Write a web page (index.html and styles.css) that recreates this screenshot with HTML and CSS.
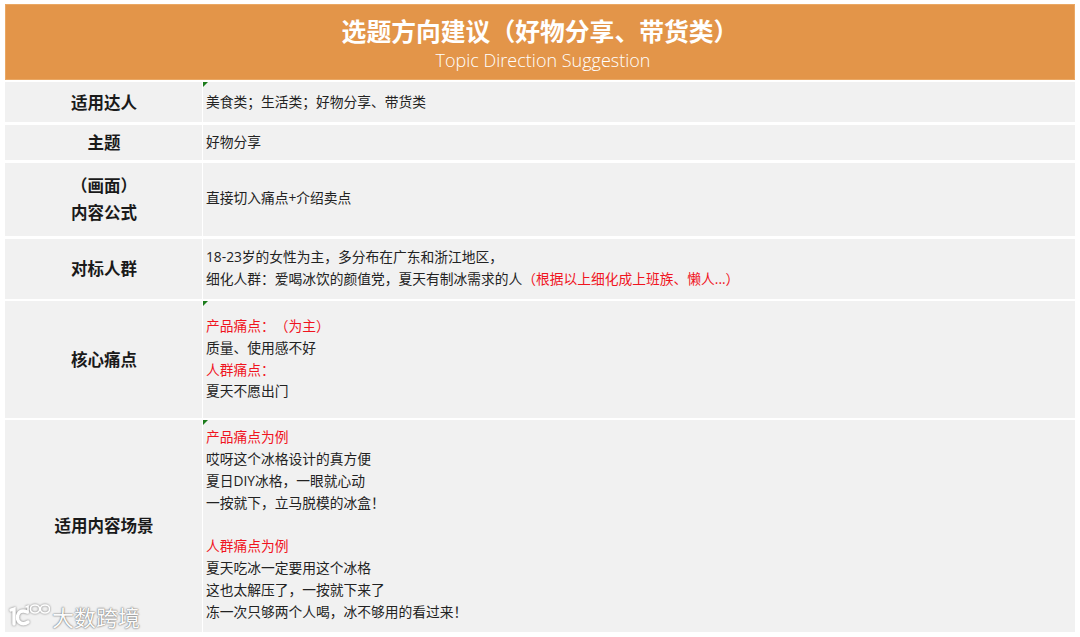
FILE: index.html
```html
<!DOCTYPE html>
<html lang="zh">
<head>
<meta charset="utf-8">
<title>选题方向建议</title>
<link rel="stylesheet" href="styles.css">
</head>
<body>
<main class="sheet">
  <header class="banner">
    <h1 class="banner-title">选题方向建议（好物分享、带货类）</h1>
    <p class="banner-sub">Topic Direction Suggestion</p>
  </header>
  <section class="row row-a">
    <div class="label">适用达人</div>
    <div class="cell flagged"><p>美食类；生活类；好物分享、带货类</p></div>
  </section>
  <section class="row row-b">
    <div class="label">主题</div>
    <div class="cell"><p>好物分享</p></div>
  </section>
  <section class="row row-c">
    <div class="label label-tall"><span>（画面）</span><span>内容公式</span></div>
    <div class="cell"><p>直接切入痛点+介绍卖点</p></div>
  </section>
  <section class="row row-d">
    <div class="label">对标人群</div>
    <div class="cell">
      <p>18-23岁的女性为主，多分布在广东和浙江地区，</p>
      <p>细化人群：爱喝冰饮的颜值党，夏天有制冰需求的人<span class="red">（根据以上细化成上班族、懒人...）</span></p>
    </div>
  </section>
  <section class="row row-e">
    <div class="label">核心痛点</div>
    <div class="cell flagged">
      <p class="red">产品痛点：（为主）</p>
      <p>质量、使用感不好</p>
      <p class="red">人群痛点：</p>
      <p>夏天不愿出门</p>
    </div>
  </section>
  <section class="row row-f">
    <div class="label">适用内容场景</div>
    <div class="cell flagged">
      <p class="red">产品痛点为例</p>
      <p>哎呀这个冰格设计的真方便</p>
      <p>夏日DIY冰格，一眼就心动</p>
      <p>一按就下，立马脱模的冰盒！</p>
      <p class="blank">&nbsp;</p>
      <p class="red">人群痛点为例</p>
      <p>夏天吃冰一定要用这个冰格</p>
      <p>这也太解压了，一按就下来了</p>
      <p>冻一次只够两个人喝，冰不够用的看过来！</p>
    </div>
  </section>
</main>
<div class="watermark">
  <svg class="wm-logo" width="42" height="30" viewBox="0 0 42 30" fill="none" stroke="#fff" stroke-linecap="round">
    <path d="M3 9 L6 8 L6 23" stroke-width="3.4"/>
    <path d="M19 11 C13 8 9.5 12 9.5 16.5 C9.5 22 15 24.5 20 21" stroke-width="3.4"/>
    <path d="M18 6 L20 5 L20 12" stroke-width="1.6"/>
    <ellipse cx="27" cy="8" rx="4.6" ry="4" stroke-width="1.7"/>
    <ellipse cx="37" cy="8" rx="4.6" ry="4" stroke-width="1.7"/>
  </svg>
  <span class="wm-text">大数跨境</span>
</div>
</body>
</html>
```
FILE: styles.css
```css
* { box-sizing: border-box; }
html, body { margin: 0; padding: 0; background: #fff; }
body {
  width: 1080px;
  height: 637px;
  overflow: hidden;
  position: relative;
  font-family: "Open Sans", "Noto Sans CJK SC", sans-serif;
  color: #222;
  text-spacing-trim: space-all;
}
.sheet {
  display: flex;
  flex-direction: column;
  gap: 3px;
  padding: 4px 5px 0;
}
.banner {
  height: 76px;
  margin-bottom: -1px;
  background: #e39549;
  box-shadow: inset 0 0 0 1px #eaa864;
  color: #fff;
  display: flex;
  flex-direction: column;
  align-items: center;
  padding-top: 9px;
}
.banner-title {
  margin: 0;
  font-family: "Noto Sans CJK SC", sans-serif;
  font-size: 24.8px;
  line-height: 35px;
  font-weight: 700;
}
.banner-sub {
  margin: 0;
  padding-left: 6px;
  font-family: "Open Sans", sans-serif;
  font-weight: 300;
  font-size: 18px;
  line-height: 24px;
  color: #fff;
}
.row {
  display: grid;
  grid-template-columns: 197px 1fr;
  column-gap: 1px;
  background: #fff;
}
.row-a { height: 40px; }
.row-b { height: 35px; }
.row-c { height: 73px; }
.row-d { height: 60px; }
.row-e { height: 117px; margin-top: -1px; }
.row-f { height: 212px; margin-top: -1px; }
.label {
  background: #f1f1f1;
  display: flex;
  flex-direction: column;
  align-items: center;
  justify-content: center;
  padding-left: 1px;
  padding-bottom: 1px;
  font-size: 16.5px;
  font-weight: 700;
  color: #1a1a1a;
  line-height: 27px;
}
.row-a .label { padding-bottom: 0; }
.row-a .cell { padding-bottom: 0; }
.row-c .cell { padding-bottom: 4px; }
.row-f .cell { padding-bottom: 3px; }
.cell {
  position: relative;
  background: #f1f1f1;
  display: flex;
  flex-direction: column;
  justify-content: center;
  padding-left: 3px;
  padding-bottom: 2px;
  font-size: 13.75px;
  line-height: 21.85px;
}
.cell p { margin: 0; }
.red { color: #f0141e; }
.flagged::before {
  content: "";
  position: absolute;
  left: 0;
  top: 0;
  border-top: 5px solid #1c7c1c;
  border-right: 5px solid transparent;
}
.watermark {
  position: absolute;
  left: 8px;
  top: 601px;
  display: flex;
  align-items: center;
  gap: 2px;
}
.wm-logo { display: block; filter: drop-shadow(0 0 1px #777); }
.wm-text {
  font-family: "Noto Sans CJK SC", sans-serif;
  font-size: 22px;
  line-height: 30px;
  color: #fbfbfb;
  text-shadow: 0 0 2px #666, 0 0 1px #888;
}
```
